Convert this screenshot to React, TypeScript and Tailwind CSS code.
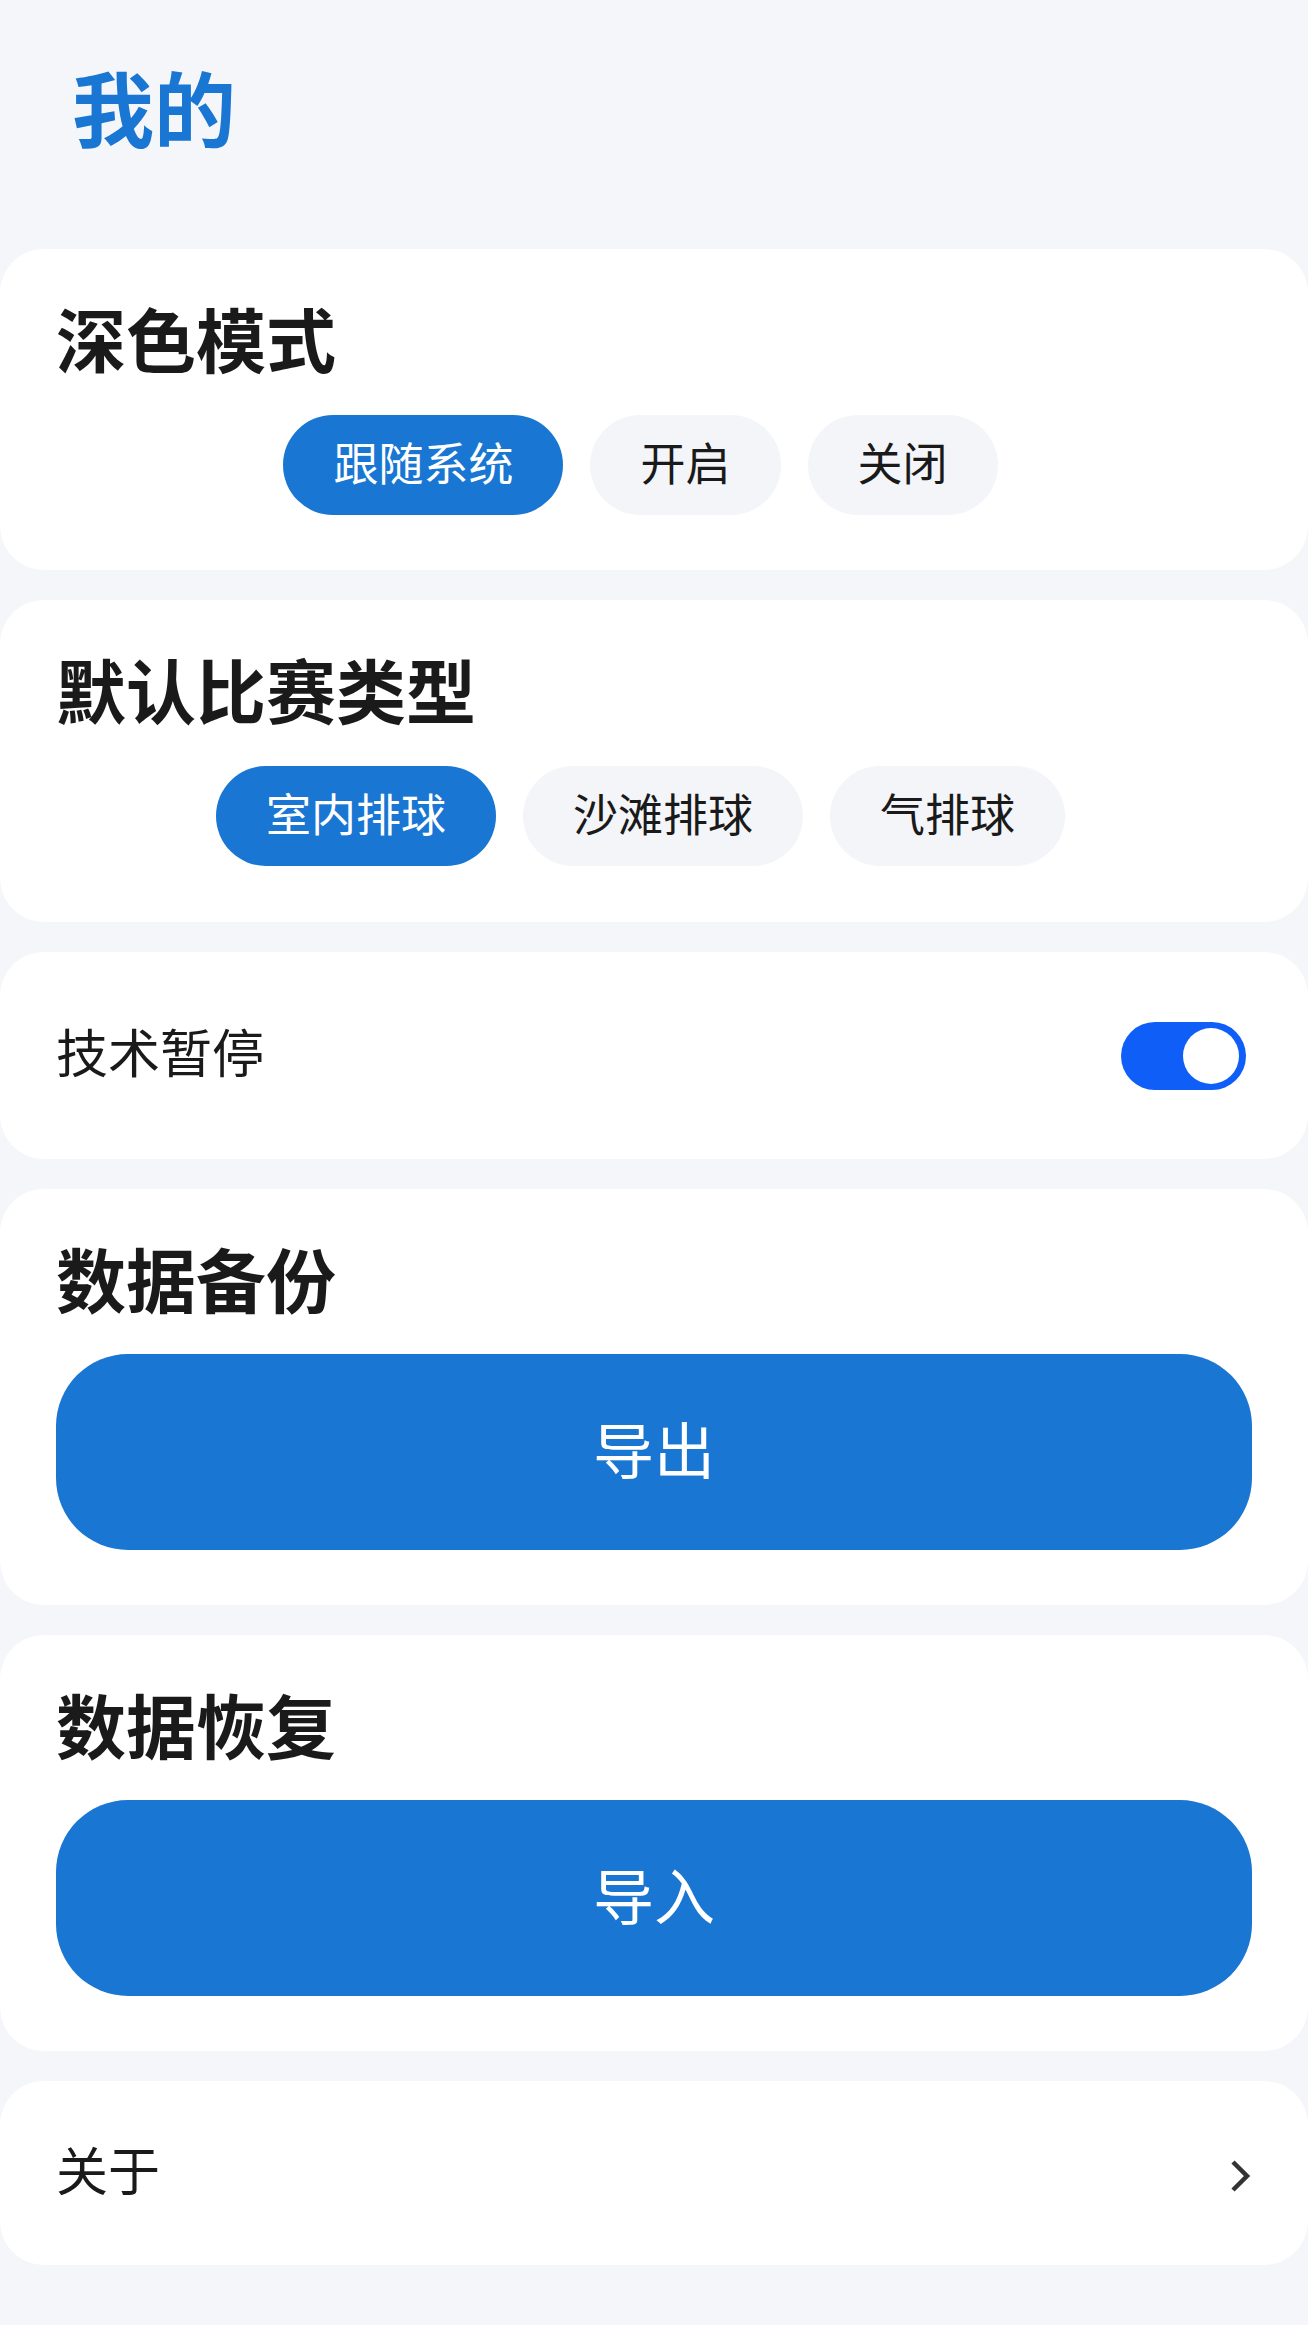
import { useState } from "react";

const FONT = { fontFamily: '"Noto Sans CJK SC", "Noto Sans", sans-serif' };

type PillGroupProps = {
  options: string[];
  value: string;
  onChange: (v: string) => void;
};

const PillGroup = ({ options, value, onChange }: PillGroupProps) => {
  return (
    <div className="flex justify-center">
      {options.map((option) => {
        const active = option === value;
        return (
          <button
            key={option}
            type="button"
            onClick={() => onChange(option)}
            className={
              active
                ? "mr-[27px] flex h-[100px] items-center rounded-full bg-[#1976d2] px-[50px] pb-[8px] text-[45px] leading-none text-white"
                : "mr-[27px] flex h-[100px] items-center rounded-full bg-[#f4f5f9] px-[50px] pb-[8px] text-[45px] leading-none text-[#1a1a1a]"
            }
          >
            {option}
          </button>
        );
      })}
    </div>
  );
};

const App = () => {
  const [theme, setTheme] = useState("跟随系统");
  const [matchType, setMatchType] = useState("室内排球");
  const [timeout, setTimeoutOn] = useState(true);

  return (
    <div className="min-h-[2325px] bg-[#f5f6fa]" style={FONT}>
      <div className="px-[72px] pt-[65px] pb-[102px]">
        <h1 className="text-[82px] font-bold leading-none text-[#1976d2]">
          我的
        </h1>
      </div>

      <div className="flex flex-col gap-[30px]">
        <section className="rounded-[44px] bg-white px-[56px] pt-[54px] pb-[55px]">
          <h2 className="mb-[42px] text-[70px] font-bold leading-none text-[#1a1a1a]">
            深色模式
          </h2>
          <PillGroup
            options={["跟随系统", "开启", "关闭"]}
            value={theme}
            onChange={setTheme}
          />
        </section>

        <section className="rounded-[44px] bg-white px-[56px] pt-[54px] pb-[56px]">
          <h2 className="mb-[42px] text-[70px] font-bold leading-none text-[#1a1a1a]">
            默认比赛类型
          </h2>
          <PillGroup
            options={["室内排球", "沙滩排球", "气排球"]}
            value={matchType}
            onChange={setMatchType}
          />
        </section>

        <section className="flex h-[207px] items-center justify-between rounded-[44px] bg-white px-[56px]">
          <span className="pb-[9px] text-[52px] leading-none text-[#1a1a1a]">技术暂停</span>
          <button
            type="button"
            onClick={() => setTimeoutOn(!timeout)}
            className={
              timeout
                ? "mr-[6px] flex h-[68px] w-[125px] items-center justify-end rounded-full bg-[#0f5ef7] px-[7px]"
                : "mr-[6px] flex h-[68px] w-[125px] items-center justify-start rounded-full bg-[#d5d8de] px-[7px]"
            }
          >
            <span className="h-[56px] w-[56px] rounded-full bg-white" />
          </button>
        </section>

        <section className="rounded-[44px] bg-white px-[56px] pt-[54px] pb-[55px]">
          <h2 className="mb-[41px] text-[70px] font-bold leading-none text-[#1a1a1a]">
            数据备份
          </h2>
          <button
            type="button"
            className="flex h-[196px] w-full items-center justify-center rounded-[72px] bg-[#1976d2] pb-[10px] text-[61px] leading-none text-white"
          >
            导出
          </button>
        </section>

        <section className="rounded-[44px] bg-white px-[56px] pt-[54px] pb-[55px]">
          <h2 className="mb-[41px] text-[70px] font-bold leading-none text-[#1a1a1a]">
            数据恢复
          </h2>
          <button
            type="button"
            className="flex h-[196px] w-full items-center justify-center rounded-[72px] bg-[#1976d2] pb-[10px] text-[61px] leading-none text-white"
          >
            导入
          </button>
        </section>

        <section className="flex h-[184px] items-center justify-between rounded-[44px] bg-white px-[56px]">
          <span className="pb-[9px] text-[52px] leading-none text-[#1a1a1a]">关于</span>
          <svg
            width="22"
            height="32"
            viewBox="0 0 22 32"
            fill="none"
            stroke="#333333"
            strokeWidth="4.5"
            className="mt-[6px]"
          >
            <path d="M3 2 L17 16 L3 30" />
          </svg>
        </section>
      </div>
    </div>
  );
};

export default App;
